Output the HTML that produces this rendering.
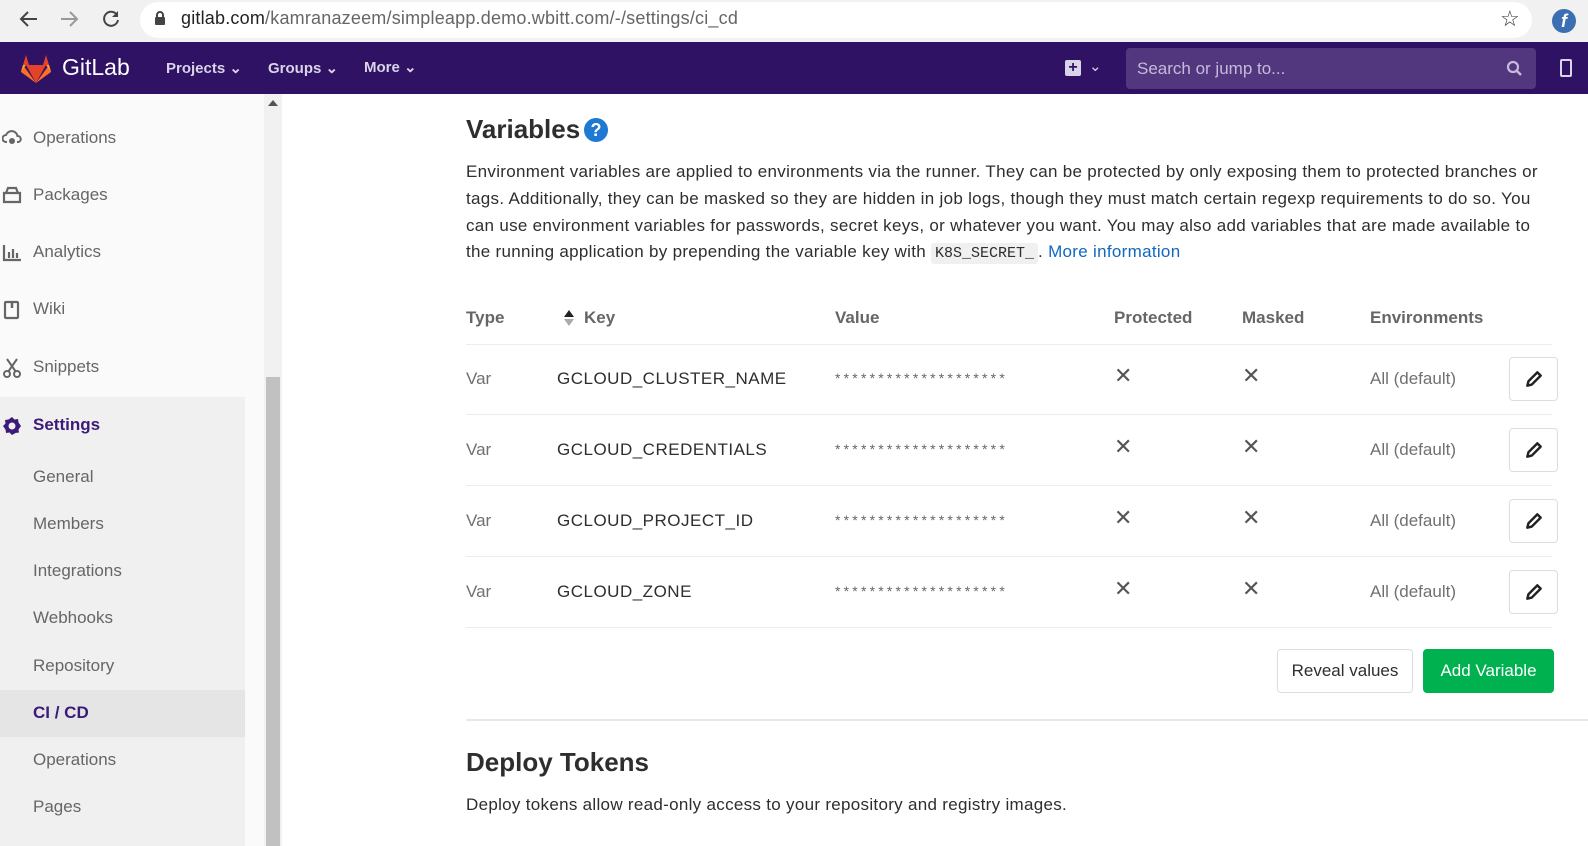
<!DOCTYPE html>
<html><head><meta charset="utf-8"><style>
*{margin:0;padding:0;box-sizing:border-box}
body{width:1588px;height:846px;overflow:hidden;background:#fff;font-family:"Liberation Sans",sans-serif;position:relative;color:#2e2e2e}
.a{position:absolute;white-space:nowrap}
.sb{font-size:17px;color:#666;letter-spacing:0px}
.p{font-size:17px;color:#2e2e2e;letter-spacing:0.3px}
.th{font-size:17px;font-weight:bold;color:#666;letter-spacing:0px}
.td{font-size:17px;color:#707070;letter-spacing:0px}
.k{font-size:17px;color:#2e2e2e;letter-spacing:0.5px}
.st{font-size:14px;color:#666;letter-spacing:3.2px}
.x{font-size:22px;color:#555}
.eb{position:absolute;width:49px;height:44px;border:1px solid #ddd;border-radius:4px;background:#fff;display:flex;align-items:center;justify-content:center}
.hr{position:absolute;left:466px;width:1086px;height:1px;background:#ececec}
</style></head><body>
<!-- browser bar -->
<div class="a" style="left:0;top:0;width:1588px;height:42px;background:#f1f1f1"></div>
<div class="a" style="left:140px;top:2px;width:1392px;height:36px;background:#fff;border-radius:18px"></div>
<svg class="a" style="left:18px;top:9px" width="22" height="20" viewBox="0 0 22 20"><path d="M19 10H4M10 3L3 10l7 7" stroke="#444" stroke-width="2" fill="none"/></svg>
<svg class="a" style="left:58px;top:9px" width="22" height="20" viewBox="0 0 22 20"><path d="M3 10h15M12 3l7 7-7 7" stroke="#999" stroke-width="2" fill="none"/></svg>
<svg class="a" style="left:100px;top:8px" width="22" height="22" viewBox="0 0 22 22"><path d="M17 7A7 7 0 1 0 18 12" stroke="#444" stroke-width="2" fill="none"/><path d="M18 3v6h-6z" fill="#444"/></svg>
<svg class="a" style="left:154px;top:10px" width="12" height="16" viewBox="0 0 12 16"><rect x="1" y="7" width="10" height="8" rx="1" fill="#444"/><path d="M3 7V5a3 3 0 0 1 6 0v2" stroke="#444" stroke-width="2" fill="none"/></svg>
<div class="a" style="left:181px;top:8px;font-size:18px;color:#666;letter-spacing:0.2px"><span style="color:#222">gitlab.com</span>/kamranazeem/simpleapp.demo.wbitt.com/-/settings/ci_cd</div>
<div class="a" style="left:1500px;top:6px;font-size:22px;color:#333">☆</div>
<div class="a" style="left:1552px;top:9px;width:24px;height:24px;border-radius:12px;background:#3c6eb4;color:#fff;font-weight:bold;font-style:italic;font-size:18px;text-align:center;line-height:24px">f</div>
<!-- nav -->
<div class="a" style="left:0;top:42px;width:1588px;height:52px;background:#2f1263"></div>
<svg class="a" style="left:20px;top:54px" width="32" height="30" viewBox="0 0 32 30"><path d="M16 29L1 18 3 11z" fill="#fc6d26"/><path d="M16 29L31 18 29 11z" fill="#fc6d26"/><path d="M16 29L6 11h20z" fill="#e24329"/><path d="M3 11L6 1l3 10z" fill="#e24329"/><path d="M29 11L26 1l-3 10z" fill="#e24329"/><path d="M1 18l2-7h3z" fill="#fca326"/><path d="M31 18l-2-7h-3z" fill="#fca326"/></svg>
<div class="a" style="left:62px;top:54px;font-size:23px;color:#fff;letter-spacing:0px">GitLab</div>
<div class="a" style="left:166px;top:59px;font-size:15px;font-weight:bold;color:#d9d4e8">Projects ⌄</div>
<div class="a" style="left:268px;top:59px;font-size:15px;font-weight:bold;color:#d9d4e8">Groups ⌄</div>
<div class="a" style="left:364px;top:58px;font-size:15px;font-weight:bold;color:#d9d4e8">More ⌄</div>
<div class="a" style="left:1065px;top:60px;width:16px;height:16px;background:#d9d4e8;border-radius:2px;color:#2f1263;font-weight:bold;font-size:16px;line-height:16px;text-align:center">+</div>
<div class="a" style="left:1089px;top:57px;font-size:15px;color:#d9d4e8">⌄</div>
<div class="a" style="left:1126px;top:48px;width:410px;height:41px;background:#52377f;border-radius:4px"></div>
<div class="a" style="left:1137px;top:59px;font-size:17px;color:#c5bbd9">Search or jump to...</div>
<svg class="a" style="left:1506px;top:60px" width="17" height="17" viewBox="0 0 17 17"><circle cx="7" cy="7" r="5" stroke="#c5bbd9" stroke-width="2.2" fill="none"/><path d="M11 11l4 4" stroke="#c5bbd9" stroke-width="2.5"/></svg>
<div class="a" style="left:1560px;top:59px;width:12px;height:18px;border:2px solid #d9d4e8;border-radius:2px"></div>
<!-- sidebar -->
<div class="a" style="left:0;top:94px;width:264px;height:752px;background:#fafafa"></div>
<div class="a" style="left:0;top:397px;width:245px;height:449px;background:#f0f0f0"></div>
<div class="a" style="left:0;top:690px;width:245px;height:47px;background:#e5e5e5"></div>
<div class="a" style="left:264px;top:94px;width:18px;height:752px;background:#f1f1f1"></div>
<div class="a" style="left:266px;top:377px;width:14px;height:469px;background:#c1c1c1"></div>
<div class="a" style="left:268px;top:100px;width:0;height:0;border-left:5px solid transparent;border-right:5px solid transparent;border-bottom:6px solid #555"></div>
<svg class="a" style="left:2px;top:129px" width="20" height="18" viewBox="0 0 20 18"><path d="M5 13H4a3.5 3.5 0 0 1 0-7 6 6 0 0 1 11.5 1A3 3 0 0 1 16 13h-1" stroke="#666" stroke-width="2" fill="none"/><circle cx="10" cy="12" r="3" fill="#666"/></svg>
<div class="a sb" style="left:33px;top:128px">Operations</div>
<svg class="a" style="left:2px;top:186px" width="20" height="18" viewBox="0 0 20 18"><path d="M2 7h16v9H2zM4 7l2-5h8l2 5" stroke="#666" stroke-width="2.2" fill="none"/></svg>
<div class="a sb" style="left:33px;top:185px">Packages</div>
<svg class="a" style="left:2px;top:244px" width="20" height="18" viewBox="0 0 20 18"><path d="M2 1v15h17" stroke="#666" stroke-width="2.2" fill="none"/><path d="M7 8v6M11 5v9M15 9v5" stroke="#666" stroke-width="2.2"/></svg>
<div class="a sb" style="left:33px;top:242px">Analytics</div>
<svg class="a" style="left:3px;top:300px" width="18" height="20" viewBox="0 0 18 20"><rect x="2" y="2" width="13" height="16" rx="1" stroke="#666" stroke-width="2.2" fill="none"/><path d="M9 2v6" stroke="#666" stroke-width="2.5"/></svg>
<div class="a sb" style="left:33px;top:299px">Wiki</div>
<svg class="a" style="left:2px;top:358px" width="20" height="20" viewBox="0 0 20 20"><path d="M5 1l9 13M15 1L6 14" stroke="#666" stroke-width="2"/><circle cx="5" cy="16" r="3" stroke="#666" stroke-width="2" fill="none"/><circle cx="15" cy="16" r="3" stroke="#666" stroke-width="2" fill="none"/></svg>
<div class="a sb" style="left:33px;top:357px">Snippets</div>
<svg class="a" style="left:2px;top:416px" width="20" height="20" viewBox="0 0 20 20"><path d="M10 1l2.5 2.5 3.5-.5.5 3.5L19 10l-2.5 3.5.5 3-3.5.5L10 19l-2.5-2.5-3.5.5-.5-3.5L1 10l2.5-2.5-.5-3.5 3.5-.5z" fill="#3b1a78"/><circle cx="10" cy="10" r="3.5" fill="#f0f0f0"/></svg>
<div class="a sb" style="left:33px;top:415px;font-weight:bold;color:#3b1a78">Settings</div>
<div class="a sb" style="left:33px;top:467px">General</div>
<div class="a sb" style="left:33px;top:514px">Members</div>
<div class="a sb" style="left:33px;top:561px">Integrations</div>
<div class="a sb" style="left:33px;top:608px">Webhooks</div>
<div class="a sb" style="left:33px;top:656px">Repository</div>
<div class="a sb" style="left:33px;top:703px;font-weight:bold;color:#3b1a78">CI / CD</div>
<div class="a sb" style="left:33px;top:750px">Operations</div>
<div class="a sb" style="left:33px;top:797px">Pages</div>
<!-- main -->
<div class="a" style="left:466px;top:114px;font-size:26px;font-weight:bold;color:#2e2e2e;letter-spacing:0px">Variables</div>
<div class="a" style="left:584px;top:118px;width:24px;height:24px;border-radius:12px;background:#1f78d1;color:#fff;font-weight:bold;font-size:18px;line-height:24px;text-align:center">?</div>
<div class="a p" style="left:466px;top:162px">Environment variables are applied to environments via the runner. They can be protected by only exposing them to protected branches or</div>
<div class="a p" style="left:466px;top:189px">tags. Additionally, they can be masked so they are hidden in job logs, though they must match certain regexp requirements to do so. You</div>
<div class="a p" style="left:466px;top:216px">can use environment variables for passwords, secret keys, or whatever you want. You may also add variables that are made available to</div>
<div class="a p" style="left:466px;top:242px">the running application by prepending the variable key with <span style="font-family:'Liberation Mono',monospace;font-size:15px;letter-spacing:0;background:#f0f0f0;padding:2px 4px;border-radius:3px">K8S_SECRET_</span>. <span style="color:#1068bf">More information</span></div>
<div class="a th" style="left:466px;top:308px">Type</div>
<svg class="a" style="left:563px;top:309px" width="12" height="18" viewBox="0 0 12 18"><path d="M1 8L6 1l5 7z" fill="#222"/><path d="M1 10l5 7 5-7z" fill="#aaa"/></svg>
<div class="a th" style="left:584px;top:308px">Key</div>
<div class="a th" style="left:835px;top:308px">Value</div>
<div class="a th" style="left:1114px;top:308px">Protected</div>
<div class="a th" style="left:1242px;top:308px">Masked</div>
<div class="a th" style="left:1370px;top:308px">Environments</div>
<div class="hr" style="top:344px"></div>
<!-- rows -->
<div class="a td" style="left:466px;top:369px">Var</div><div class="a k" style="left:557px;top:369px">GCLOUD_CLUSTER_NAME</div><div class="a st" style="left:835px;top:370px">********************</div><div class="a x" style="left:1114px;top:363px">✕</div><div class="a x" style="left:1242px;top:363px">✕</div><div class="a td" style="left:1370px;top:369px">All (default)</div>
<div class="eb" style="left:1509px;top:357px"><svg width="20" height="20" viewBox="0 0 18 18"><path d="M3 15l1-4 8-8 3 3-8 8z" stroke="#222" stroke-width="2.2" fill="none" stroke-linejoin="round"/></svg></div>
<div class="hr" style="top:414px"></div>
<div class="a td" style="left:466px;top:440px">Var</div><div class="a k" style="left:557px;top:440px">GCLOUD_CREDENTIALS</div><div class="a st" style="left:835px;top:441px">********************</div><div class="a x" style="left:1114px;top:434px">✕</div><div class="a x" style="left:1242px;top:434px">✕</div><div class="a td" style="left:1370px;top:440px">All (default)</div>
<div class="eb" style="left:1509px;top:428px"><svg width="20" height="20" viewBox="0 0 18 18"><path d="M3 15l1-4 8-8 3 3-8 8z" stroke="#222" stroke-width="2.2" fill="none" stroke-linejoin="round"/></svg></div>
<div class="hr" style="top:485px"></div>
<div class="a td" style="left:466px;top:511px">Var</div><div class="a k" style="left:557px;top:511px">GCLOUD_PROJECT_ID</div><div class="a st" style="left:835px;top:512px">********************</div><div class="a x" style="left:1114px;top:505px">✕</div><div class="a x" style="left:1242px;top:505px">✕</div><div class="a td" style="left:1370px;top:511px">All (default)</div>
<div class="eb" style="left:1509px;top:499px"><svg width="20" height="20" viewBox="0 0 18 18"><path d="M3 15l1-4 8-8 3 3-8 8z" stroke="#222" stroke-width="2.2" fill="none" stroke-linejoin="round"/></svg></div>
<div class="hr" style="top:556px"></div>
<div class="a td" style="left:466px;top:582px">Var</div><div class="a k" style="left:557px;top:582px">GCLOUD_ZONE</div><div class="a st" style="left:835px;top:583px">********************</div><div class="a x" style="left:1114px;top:576px">✕</div><div class="a x" style="left:1242px;top:576px">✕</div><div class="a td" style="left:1370px;top:582px">All (default)</div>
<div class="eb" style="left:1509px;top:570px"><svg width="20" height="20" viewBox="0 0 18 18"><path d="M3 15l1-4 8-8 3 3-8 8z" stroke="#222" stroke-width="2.2" fill="none" stroke-linejoin="round"/></svg></div>
<div class="hr" style="top:627px"></div>
<div class="a" style="left:1277px;top:649px;width:136px;height:44px;border:1px solid #ddd;border-radius:4px;background:#fff;font-size:17px;color:#2e2e2e;text-align:center;line-height:42px">Reveal values</div>
<div class="a" style="left:1423px;top:649px;width:131px;height:44px;border:1px solid #00b24f;border-radius:4px;background:#00b24f;font-size:17px;color:#fff;text-align:center;line-height:42px">Add Variable</div>
<div class="a" style="left:466px;top:719px;width:1122px;height:2px;background:#e8e8e8"></div>
<div class="a" style="left:466px;top:747px;font-size:26px;font-weight:bold;color:#2e2e2e;letter-spacing:0px">Deploy Tokens</div>
<div class="a p" style="left:466px;top:795px">Deploy tokens allow read-only access to your repository and registry images.</div>
</body></html>
